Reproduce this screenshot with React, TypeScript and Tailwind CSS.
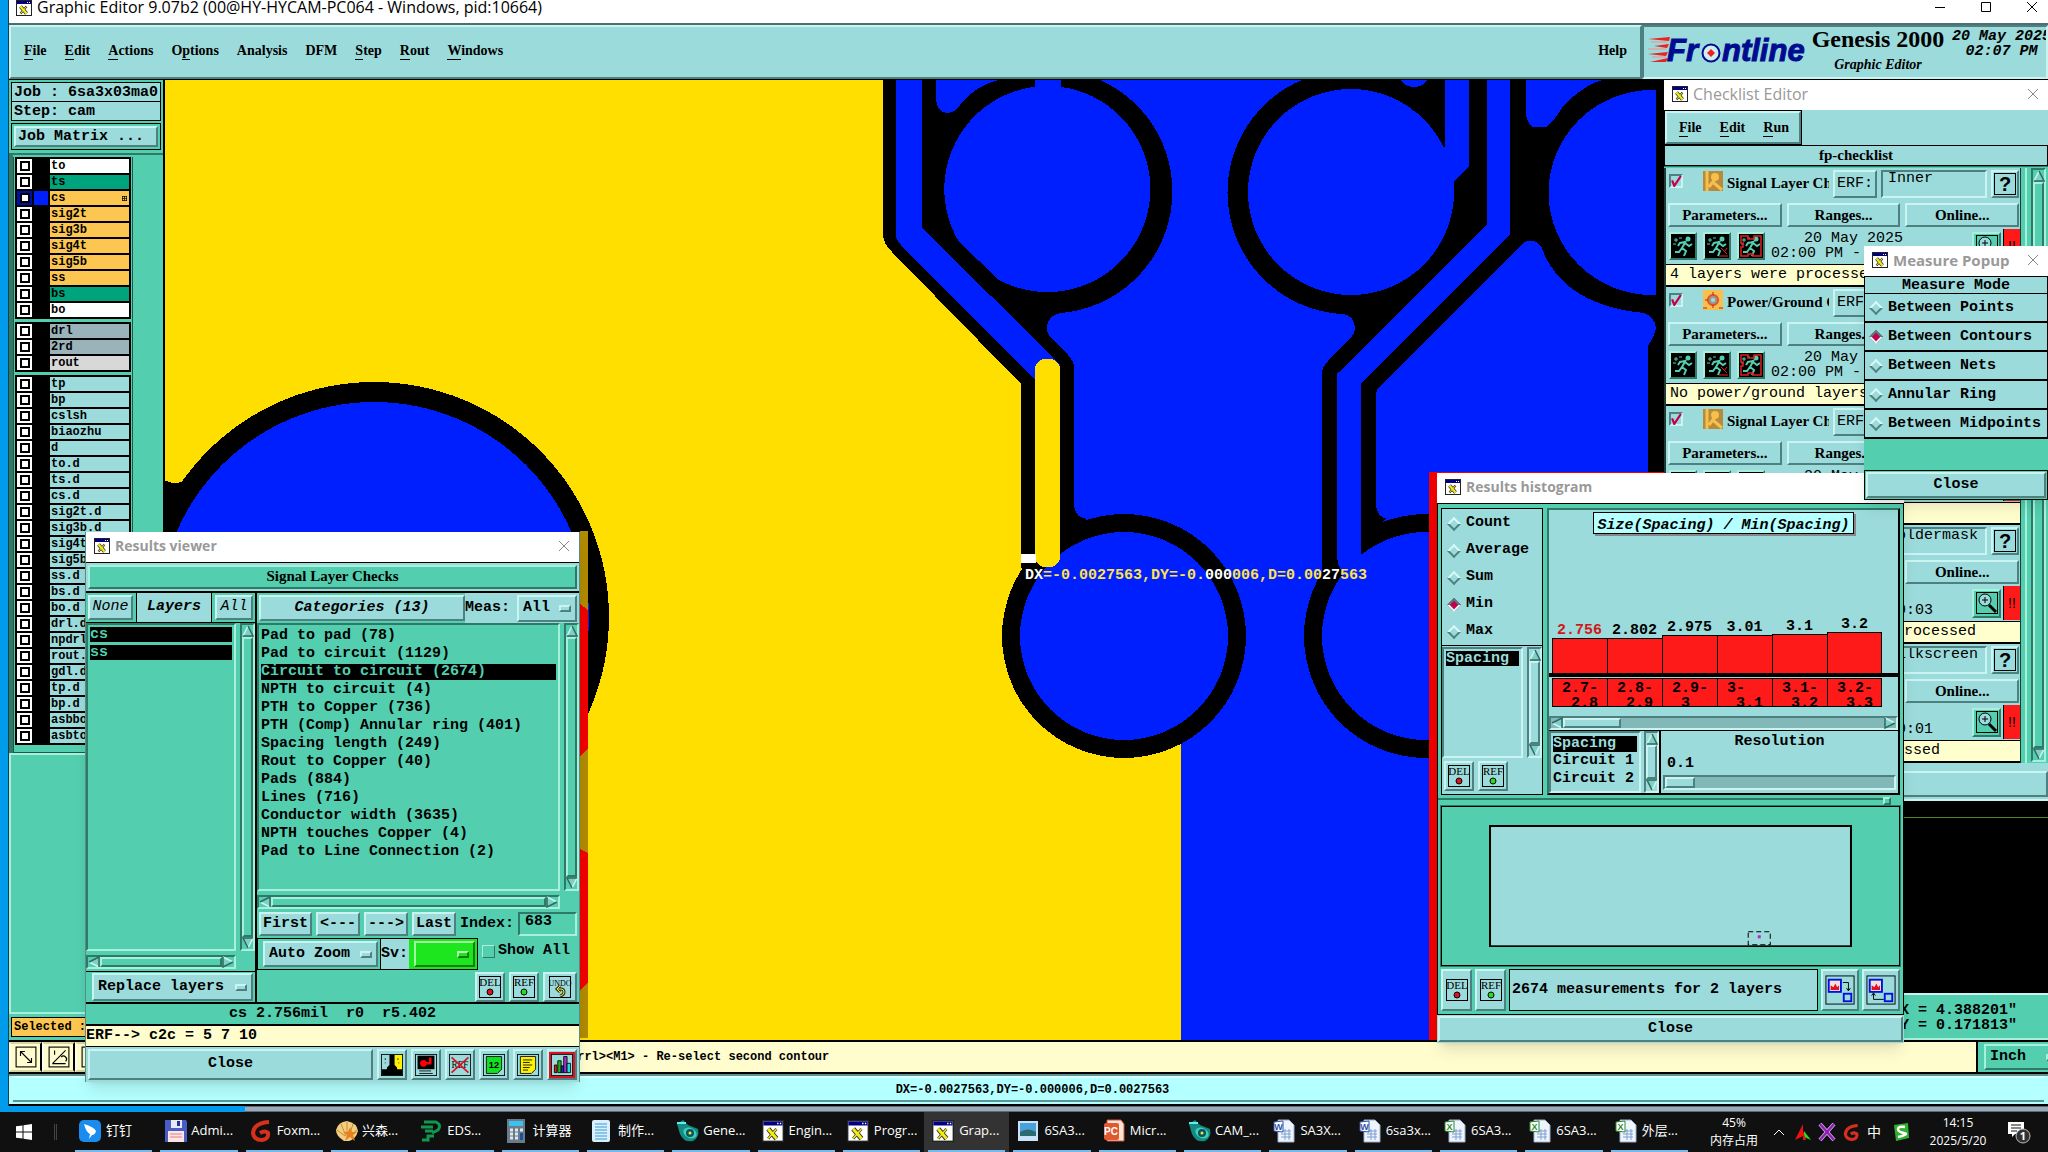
import { type FC, type ReactNode, useState } from "react";
import { clsx } from "clsx";

const MONO = "[font-family:'Liberation_Mono',monospace]";
const SERIF = "[font-family:'Liberation_Serif',serif]";
const UI = "[font-family:'Open_Sans','Noto_Sans_CJK_SC',sans-serif]";

// Motif style bevels
const raised = "border-2 border-t-[#c9f4f1] border-l-[#c9f4f1] border-b-[#4f8080] border-r-[#4f8080] bg-[#9cdbdb]";
const sunken = "border-2 border-t-[#4f8080] border-l-[#4f8080] border-b-[#c9f4f1] border-r-[#c9f4f1] bg-[#9cdbdb]";
const raisedGreen = "border-2 border-t-[#a6f0dc] border-l-[#a6f0dc] border-b-[#2f7a66] border-r-[#2f7a66] bg-[#53cfb0]";
const sunkenGreen = "border-2 border-t-[#2f7a66] border-l-[#2f7a66] border-b-[#a6f0dc] border-r-[#a6f0dc] bg-[#53cfb0]";

type Tone = "aqua" | "green";

const Btn: FC<{ children: ReactNode; className?: string; label?: string; tone?: Tone }> = ({ children, className, label, tone = "aqua" }) => (
  <button aria-label={label} className={clsx("flex items-center justify-center whitespace-nowrap", tone === "aqua" ? raised : raisedGreen, className)}>
    {children}
  </button>
);

const XIcon: FC<{ className?: string }> = ({ className = "size-4" }) => (
  <svg viewBox="0 0 16 16" className={clsx("shrink-0", className)}>
    <rect x="0.5" y="0.5" width="15" height="15" fill="#fff" stroke="#222" />
    <rect x="1" y="1" width="14" height="3" fill="#000080" />
    <path d="M11 2.500h1M13 2.500h1" stroke="#fff" />
    <path d="M4.500 6.500l6 7" stroke="#333" strokeWidth="3.600" />
    <path d="M10.500 6.500l-6 7" stroke="#333" strokeWidth="2" />
    <path d="M4.500 6.500l6 7" stroke="#f4ee10" strokeWidth="2.200" />
    <path d="M10.500 6.500l-6 7" stroke="#f4ee10" />
  </svg>
);

const CloseGlyph: FC<{ className?: string }> = ({ className }) => (
  <svg viewBox="0 0 12 12" className={clsx("size-3", className)} fill="none" stroke="currentColor">
    <path d="M1 1l10 10M11 1L1 11" />
  </svg>
);

const TitleBar: FC<{ title: string; size?: string; closable?: boolean }> = ({ title, size = "text-[15px]", closable = true }) => (
  <div className={clsx("flex h-[30px] shrink-0 items-center bg-white pr-[9px] pb-[2px] pl-2", UI)}>
    <XIcon />
    <span className={clsx("ml-[5px] flex-1 leading-5 whitespace-nowrap text-[#999]", size)}>{title}</span>
    {closable && (
      <button aria-label={`Close ${title}`} className="text-[#888]">
        <CloseGlyph />
      </button>
    )}
  </div>
);

const Arrow: FC<{ dir: "up" | "down" | "left" | "right" }> = ({ dir }) => (
  <svg viewBox="0 0 12 12" className={clsx("size-3 shrink-0", dir === "down" && "rotate-180", dir === "left" && "-rotate-90", dir === "right" && "rotate-90")}>
    <path d="M6 1L11 11H1Z" fill="#7fd0c4" />
    <path d="M1 11L6 1" stroke="#c9f4f1" strokeWidth="1.500" />
    <path d="M6 1L11 11H1" stroke="#2f6a62" strokeWidth="1.500" fill="none" />
  </svg>
);

const VScroll: FC<{ tone?: Tone; className?: string }> = ({ tone = "green", className }) => (
  <div className={clsx("flex w-[15px] shrink-0 flex-col items-center", tone === "green" ? sunkenGreen : sunken, className)}>
    <Arrow dir="up" />
    <div className={clsx("w-full flex-1", tone === "green" ? raisedGreen : raised)} />
    <Arrow dir="down" />
  </div>
);

const HScroll: FC<{ tone?: Tone; thumb?: string; className?: string }> = ({ tone = "green", thumb = "flex-1", className }) => (
  <div className={clsx("flex h-[14px] shrink-0 items-center", tone === "green" ? sunkenGreen : "border-2 border-t-[#4f8080] border-l-[#4f8080] border-b-[#c9f4f1] border-r-[#c9f4f1] bg-[#82b8b8]", className)}>
    <Arrow dir="left" />
    <div className={clsx("h-full", tone === "green" ? raisedGreen : raised, thumb)} />
    {thumb !== "flex-1" && <div className="flex-1" />}
    <Arrow dir="right" />
  </div>
);

const Menu: FC<{ label: string; options: string[]; className?: string; mark?: string }> = ({ label, options, className, mark = raised }) => (
  <div className={clsx("flex items-center", className)}>
    <select aria-label={label} className="min-w-0 flex-1 appearance-none bg-transparent pl-1 outline-none">
      {options.map(o => <option key={o}>{o}</option>)}
    </select>
    <span className={clsx("pointer-events-none mr-1 h-[7px] w-3", mark)} />
  </div>
);

const Radio: FC<{ name: string; label: string; checked: boolean; onPick: () => void; className?: string }> = ({ name, label, checked, onPick, className }) => (
  <label className={clsx("flex items-center gap-[7px] whitespace-nowrap", className)}>
    <input type="radio" name={name} checked={checked} onChange={onPick}
      className="ml-[2px] size-[10px] shrink-0 rotate-45 appearance-none border-2 border-t-[#d8faf8] border-l-[#d8faf8] border-b-[#4f8080] border-r-[#4f8080] checked:border-t-[#4f8080] checked:border-l-[#4f8080] checked:border-b-[#d8faf8] checked:border-r-[#d8faf8] checked:bg-[#c4004c]" />
    {label}
  </label>
);

const TagButton: FC<{ text: string; dot?: "red" | "green"; className?: string }> = ({ text, dot, className }) => (
  <Btn label={text} className={className}>
    <svg viewBox="0 0 24 24" className="h-6 w-6 overflow-visible">
      <rect x="1.500" y="1.500" width="21" height="21" fill="none" stroke="#000" />
      <text x="12" y="11" textAnchor="middle" fontSize={text.length > 3 ? 8 : 11} fontWeight="normal" fontFamily="Liberation Serif" fill="#000">{text}</text>
      {dot ? (
        <circle cx="12" cy="17" r="3" fill={dot === "red" ? "#e01020" : "#20e020"} stroke="#000" />
      ) : (
        <>
          <path d="M10 14h3q3 0 3 3t-4 4M12 11l-3 3 3 3" fill="none" stroke="#333" strokeWidth="3" />
          <path d="M10 14h3q3 0 3 3t-4 4M12 11l-3 3 3 3" fill="none" stroke="#f4ee10" />
        </>
      )}
    </svg>
  </Btn>
);

const menus: [string, number][] = [["File", 0], ["Edit", 0], ["Actions", 0], ["Options", 1], ["Analysis", -1], ["DFM", -1], ["Step", 0], ["Rout", 0], ["Windows", 0]];

const Mnemonic: FC<{ text: string; at: number }> = ({ text, at }) =>
  at < 0 ? <>{text}</> : (
    <>{text.slice(0, at)}<span className="border-b border-black pb-px">{text[at]}</span>{text.slice(at + 1)}</>
  );

const TopBar = () => (
  <header className="flex h-[57px] shrink-0 border-t-2 border-b border-t-[#4f6f6f] border-b-black bg-[#9cdbdb]">
    <nav className={clsx("flex min-w-0 flex-1 items-center gap-[18px] px-[13px] pb-[2px] text-[14px] font-bold", raised, SERIF)}>
      {menus.map(([text, at]) => (
        <button key={text} className="leading-5"><Mnemonic text={text} at={at} /></button>
      ))}
      <button className="ml-auto leading-5">Help</button>
    </nav>
    <div className={clsx("flex w-[406px] items-center overflow-hidden pl-[3px]", sunken)}>
      <svg viewBox="0 0 162 32" className="h-8 w-[162px] shrink-0">
        <path d="M1 3l22-2-1 4zM7 10l15-2-2 4zM1 18l20-2-2 4zM3 26l18-4-2 4z" fill="#ee2020" />
        <path d="M4 6h16M1 13h18M5 21h14" stroke="#ff8888" />
        <g fontFamily="Liberation Sans" fontWeight="bold" fontStyle="italic" fontSize="31" fill="#000c90" stroke="#000c90">
          <text x="20" y="25">Fr</text>
          <text x="75" y="25">ntline</text>
        </g>
        <circle cx="64" cy="17" r="8.500" fill="#cfeef0" stroke="#000c90" strokeWidth="2" />
        <path d="M64 13l4 4-4 4-4-4z" fill="#ee2020" />
      </svg>
      <div className={clsx("ml-[1px] w-[136px] shrink-0 pb-1 text-center font-bold whitespace-nowrap", SERIF)}>
        <div className="text-[24px] leading-7">Genesis 2000</div>
        <div className="pt-[2px] text-[14px] leading-5 italic">Graphic Editor</div>
      </div>
      <div className={clsx("ml-[6px] shrink-0 self-start pt-[2px] text-center text-[15px] leading-[15px] font-bold italic", MONO)}>
        <div>20 May 2025</div>
        <div>02:07 PM</div>
      </div>
    </div>
  </header>
);

const layerGroups: { names: string[] }[] = [
  { names: ["to", "ts", "cs", "sig2t", "sig3b", "sig4t", "sig5b", "ss", "bs", "bo"] },
  { names: ["drl", "2rd", "rout"] },
  {
    names: ["tp", "bp", "cslsh", "biaozhu", "d", "to.d", "ts.d", "cs.d", "sig2t.d", "sig3b.d", "sig4t.d", "sig5b.d",
      "ss.d", "bs.d", "bo.d", "drl.d", "npdrl.d", "rout.d", "gdl.d", "tp.d", "bp.d", "asbbo", "asbto"],
  },
];

const layerColor = (name: string) => {
  if (name === "to" || name === "bo") return "bg-white";
  if (name === "ts" || name === "bs") return "bg-[#00a47c]";
  if (/^(cs|ss|sig\d.)$/.test(name)) return "bg-[#fcc651]";
  if (name === "drl" || name === "2rd") return "bg-[#9ab3bb]";
  if (name === "rout") return "bg-[#d8d8d8]";
  return "bg-[#9cdbdb]";
};

const LayerPanel = () => (
  <aside className="flex w-[156px] shrink-0 flex-col border-r-2 border-black bg-[#53cfb0]">
    <div className={clsx("px-[2px] pt-[2px] text-[15px] leading-[19px] font-bold whitespace-nowrap", MONO)}>
      <div className="h-5 border border-black bg-[#9cdbdb] pl-[2px]">Job : 6sa3x03ma0</div>
      <div className="h-[19px] border border-t-0 border-black bg-[#9cdbdb] pl-[2px]">Step: cam</div>
      <div className="mt-[2px] border border-black p-[2px]">
        <Btn className="h-[21px] w-full pl-[2px]"><span className="flex-1 text-left">Job Matrix ...</span></Btn>
      </div>
    </div>
    <div className="mt-[3px] flex border-t-2 border-l-4 border-[#2f7a66] bg-[#53cfb0] pt-[2px]">
      <div className="flex w-[120px] flex-col gap-[3px] border border-t-0 border-[#1d5a4a] px-px pb-[7px]">
        {layerGroups.map(g => (
          <div key={g.names[0]} className="flex flex-col gap-[2px] bg-black p-[2px]">
            {g.names.map(n => (
              <label key={n} className={clsx("flex h-[14px] text-[12px] leading-[14px] font-bold", MONO)}>
                <span className={clsx("flex w-[15px] items-center justify-center", n === "cs" ? "bg-[#0010a0]" : "bg-white")}>
                  <input type="checkbox" aria-label={n} className="size-[10px] appearance-none border-2 border-black bg-white" />
                </span>
                <span className={clsx("mx-[2px] w-[14px]", n === "cs" ? "bg-[#001fff]" : "bg-black")} />
                <span className={clsx("flex flex-1 items-center justify-between overflow-hidden pr-[2px] pl-px", layerColor(n))}>
                  {n}
                  {n === "cs" && <svg viewBox="0 0 5 5" className="size-[5px]"><path d="M0 .500h5M0 2.500h5M0 4.500h5M.500 0v5M2.500 0v5M4.500 0v5" stroke="#000" strokeWidth=".700" /></svg>}
                </span>
              </label>
            ))}
          </div>
        ))}
      </div>
    </div>
    <div className="flex-1 border-t-2 border-l-2 border-[#a6f0dc]" />
    <div className="border-t-2 border-[#a6f0dc] px-[2px] py-[3px]">
      <div className={clsx("h-[20px] border border-black bg-[#fcc651] pl-[2px] text-[12px] leading-[18px] font-bold", MONO)}>Selected :</div>
    </div>
  </aside>
);

// Board artwork, drawn in screen units
const Board = () => (
  <svg viewBox="165 80 1499 960" preserveAspectRatio="xMinYMin slice" className="h-full w-full" shapeRendering="crispEdges">
    <rect x="164" y="80" width="1500" height="960" fill="#ffdf00" />
    <circle cx="374" cy="617" r="235" fill="#000" />
    <path d="M164 480Q170 483 174 483Q181 483 184 480L230 560V800H164Z" fill="#000" />
    <circle cx="374" cy="617" r="215" fill="#001fff" />
    <path d="M580 531h8v507h-8z" fill="#b08a00" />
    <path d="M580 604l8 6V748l-8 8zM580 849l8 4V982l-8 8z" fill="#f00000" />

    <path d="M883 80V235Q884 245 892 252L1021 384V567L1060 636H1181V1040H1664V80Z" fill="#000" />
    <path d="M1181 640H1664V1040H1181Z" fill="#001fff" />
    <path d="M1100 80A122 122 0 0 1 1061 313Q1047 316 1047 328Q1047 334 1051 338L1068 355Q1074 361 1074 368V505Q1076 518 1085 518L1124 600L1181 720H1400L1322 600V374Q1322 367 1328 361L1350 338Q1355 334 1355 328Q1354 314 1340 314A122 122 0 0 1 1302 80Z" fill="#001fff" />
    <path d="M1379 387L1520 246Q1531 235 1541 246Q1562 305 1644 313Q1655 317 1656 328Q1655 335 1648 346V1040H1440L1376 600V396Q1376 390 1379 387Z" fill="#001fff" />
    <circle cx="1124" cy="636" r="122" fill="#000" />
    <circle cx="1426" cy="636" r="122" fill="#000" />
    <path d="M1376 505Q1378 518 1386 518L1376 530Z" fill="#000" />
    <path d="M1021 540H1074V560H1021Z" fill="#000" />
    <circle cx="1124" cy="636" r="104" fill="#001fff" />
    <circle cx="1426" cy="636" r="104" fill="#001fff" />

    <path d="M896 80H922V228L1060 364V390H1045L901 245Q896 240 896 234Z" fill="#001fff" />
    <path d="M936 80V100Q938 113 948 113Q957 112 962 102Q975 87 998 80Z" fill="#001fff" />
    <path d="M1035 80h26v16h-26z" fill="#001fff" />
    <path d="M959 242A103 103 0 1 1 999 280Z" fill="#001fff" />
    <circle cx="1351" cy="192" r="103" fill="#001fff" />
    <path d="M1401 80h26q-4 7-13 7t-13-7z" fill="#001fff" />
    <path d="M1436 80H1445V147Q1430 116 1412 110Z" fill="#000" />
    <path d="M1445 80H1469V166L1454 181V192H1440V147H1445Z" fill="#001fff" />
    <path d="M1487 80H1510V234L1361 383V555L1350 580Q1337 570 1337 556V374L1487 225Z" fill="#001fff" />
    <path d="M1526 80V115Q1529 127 1534 127H1546Q1554 121 1562 108Q1580 87 1602 80Z" fill="#001fff" />
    <path d="M1656 90H1652A103 102 0 0 0 1652 295H1656Z" fill="#001fff" />

    <rect x="1035" y="359" width="25" height="208" rx="10" fill="#ffdf00" />
    <rect x="1021" y="554" width="15" height="9" fill="#fff" />
    <path d="M1429 472H1664V475H1437V1040H1429Z" fill="#f00000" />
    <text x="1025" y="579" fontFamily="Liberation Mono" fontSize="15" fontWeight="bold" fill="#ffe24a">
      <tspan fill="#fff">DX</tspan>=-0.0027563,DY=-0.<tspan fill="#fff">000</tspan>006,D=0.00<tspan fill="#fff">27</tspan>563
    </text>
  </svg>
);

const OverviewColumn = () => (
  <section className="flex w-[384px] shrink-0 flex-col bg-[#53cfb0]">
    <div className="flex-1" />
    <div className="h-[194px] border-t-2 border-[#c9f4f1] bg-black pt-4"><div className="h-px bg-[#4c8a20]" /></div>
    <div className={clsx("h-[47px] border-y-2 border-t-[#c9f4f1] border-b-[#a6f0dc] pt-[8px] pl-[236px] text-[15px] leading-[15px] font-bold whitespace-pre", MONO)}>
      <div>X = 4.388201"</div>
      <div>Y = 0.171813"</div>
    </div>
  </section>
);

const CreamButton: FC<{ label: string; children: ReactNode }> = ({ label, children }) => (
  <button aria-label={label} className="flex w-[33px] items-center justify-center border-2 border-y-[#d8d4a0] border-l-[#fffff0] border-r-black bg-[#fffcce]">
    <svg viewBox="0 0 20 20" className="size-[22px]" fill="none" stroke="#000">
      <rect x="1" y="1" width="18" height="18" />
      {children}
    </svg>
  </button>
);

const MessageBar = () => (
  <div className="flex h-[34px] shrink-0 border-y-2 border-black bg-[#fffcce]">
    <CreamButton label="Pan"><path d="M5 5l10 10M5 9V5h4M15 11v4h-4" /></CreamButton>
    <CreamButton label="Angle"><path d="M4 16L16 4M6 4v4M4 16h12M12 10q2-2 4 0t0 4" /></CreamButton>
    <CreamButton label="Grid"><path d="M5 5h10v10H5zM5 10h10" /></CreamButton>
    <div className={clsx("flex-1 pl-[462px] text-[12px] leading-[30px] font-bold whitespace-nowrap", MONO)}>
      orrl&gt;&lt;M1&gt; - Re-select second contour
    </div>
    <div className="w-[72px] overflow-hidden border-l-2 border-black bg-[#53cfb0] py-[2px] pl-[6px]">
      <Menu label="Units" options={["Inch", "MM"]} className={clsx("h-full w-20 text-[15px] font-bold", MONO, raisedGreen)} mark={raisedGreen} />
    </div>
  </div>
);

const ScreenWindow = () => (
  <div className="ml-2 flex min-h-0 flex-1 flex-col border-l border-[#1b3c4c]">
    <div className={clsx("flex h-[23px] shrink-0 items-center bg-white pr-[10px] pl-[7px]", UI)}>
      <XIcon className="mb-2 size-4" />
      <span className="mb-[10px] ml-[5px] flex-1 text-[16px] leading-5">Graphic Editor 9.07b2 (00@HY-HYCAM-PC064 - Windows, pid:10664)</span>
      <span className="mb-[10px] flex gap-[34px]">
        <button aria-label="Minimize"><svg viewBox="0 0 12 12" className="size-3"><path d="M1 6.500h10" stroke="#000" /></svg></button>
        <button aria-label="Maximize"><svg viewBox="0 0 12 12" className="size-3"><path d="M1.500 1.500h9v9h-9z" stroke="#000" fill="none" /></svg></button>
        <button aria-label="Close"><CloseGlyph /></button>
      </span>
    </div>
    <TopBar />
    <div className="flex min-h-0 flex-1">
      <LayerPanel />
      <div className="min-w-0 flex-1 overflow-hidden"><Board /></div>
      <OverviewColumn />
    </div>
    <MessageBar />
    <div className="h-[32px] shrink-0 border-y-2 border-t-[#5d9390] border-b-black bg-[#b4ffff] px-1">
      <div className={clsx("h-[26px] border-y-2 border-t-[#d8ffff] border-b-[#5d9390] pl-2 text-center text-[12px] leading-[24px] font-bold", MONO)}>
        DX=-0.0027563,DY=-0.000006,D=0.0027563
      </div>
    </div>
  </div>
);

const categories = [
  "Pad to pad (78)", "Pad to circuit (1129)", "Circuit to circuit (2674)", "NPTH to circuit (4)", "PTH to Copper (736)",
  "PTH (Comp) Annular ring (401)", "Spacing length (249)", "Rout to Copper (40)", "Pads (884)", "Lines (716)",
  "Conductor width (3635)", "NPTH touches Copper (4)", "Pad to Line Connection (2)",
];

const footIcons: { label: string; art: ReactNode; alert?: boolean }[] = [
  { label: "Highlight", art: <><rect x="0" y="0" width="24" height="24" fill="#9cdbdb" /><path d="M15 0h9v18h-9z" fill="#fff200" /><path d="M9 0h6v12l3 3v2h6v7H0v-7h6v-2l3-3z" fill="#000" /><path d="M4 4v2M4 9v1M19 4v2M20 9v1" stroke="#000" /></> },
  { label: "Snapshot", art: <><rect x="2" y="1" width="20" height="16" fill="#000" /><circle cx="9" cy="10" r="4" fill="#f00" /><path d="M9 10h8V3" stroke="#f00" strokeWidth="3" fill="none" /><path d="M4 19h14M4 22h16" stroke="#000" /></> },
  { label: "Remove reference", art: <><text x="12" y="16" textAnchor="middle" fontSize="11" fontWeight="normal" fontFamily="Liberation Serif">REF</text><path d="M2 3l20 18M22 3L2 21" stroke="#e01020" strokeWidth="2" /></> },
  { label: "Report", art: <><path d="M3 2h18v15l-5 5H3z" fill="#10e020" stroke="#000" /><text x="12" y="15" textAnchor="middle" fontSize="11" fontWeight="bold" fontFamily="Liberation Sans">12</text></> },
  { label: "Notes", art: <><path d="M3 2h18v15l-5 5H3z" fill="#fff200" stroke="#000" /><path d="M6 6h11M6 9h8M6 12h11M6 15h8M6 18h6" stroke="#000" /></> },
  { label: "Histogram", alert: true, art: <><path d="M3 12h3v9H3z" fill="#e02020" stroke="#000" /><path d="M7 7h4v14H7z" fill="#20b020" stroke="#000" /><path d="M11 13h3v8h-3z" fill="#2020e0" stroke="#000" /><path d="M14 2h4v19h-4z" fill="#a030c0" stroke="#000" /><path d="M18 10h4v11h-4z" fill="#20e0e0" stroke="#000" /></> },
];

const ResultsViewer = () => (
  <section className={clsx("absolute top-[532px] left-[85px] flex w-[495px] flex-col border-x border-[#5a8a8a] bg-[#53cfb0] text-[15px] font-bold shadow-lg", MONO)}>
    <TitleBar title="Results viewer" size="text-[14px]" />
    <div className="border-y border-b-2 border-black bg-[#9cdbdb] p-[2px]">
      <h2 className={clsx("h-[24px] text-center leading-[19px]", raisedGreen, SERIF)}>Signal Layer Checks</h2>
    </div>
    <div className="flex h-[411px]">
      <div className="flex w-[171px] shrink-0 flex-col border-r-2 border-black">
        <div className="flex h-[30px] items-stretch gap-[3px] border-b border-black p-[2px] italic">
          <Btn className="w-[45px] font-normal">None</Btn>
          <span className="-my-[2px] flex flex-1 items-center justify-center border-x border-black bg-[#9cdbdb]">Layers</span>
          <Btn className="w-[38px] font-normal">All</Btn>
        </div>
        <div className="flex flex-1 gap-1">
          <ul className={clsx("flex flex-1 flex-col gap-[3px] p-[2px] leading-[15px] text-[#53cfb0]", sunkenGreen)}>
            <li className="bg-black">cs</li>
            <li className="bg-black">ss</li>
          </ul>
          <VScroll />
        </div>
        <HScroll className="mt-1 mr-[19px] mb-[2px]" />
        <div className="border-t border-b-2 border-black py-px pr-[2px] pl-[6px]">
          <Menu label="Layer action" options={["Replace layers", "Add layers"]} className={clsx("h-[28px]", raised)} />
        </div>
      </div>
      <div className="flex min-w-0 flex-1 flex-col">
        <div className="flex h-[30px] items-stretch p-[2px] pr-0">
          <Btn className="w-[206px] italic">Categories (13)</Btn>
          <div className="-my-[2px] flex flex-1 items-center justify-between bg-[#9cdbdb] pr-[2px]">
            <span>Meas:</span>
            <Menu label="Measurements" options={["All", "None"]} className={clsx("h-[27px] w-[60px]", raised)} />
          </div>
        </div>
        <div className="flex h-[269px] gap-1">
          <ul className={clsx("flex-1 py-[2px] pr-[2px] pl-[2px] leading-[18px]", sunkenGreen)}>
            {categories.map((c, i) => (
              <li key={c} className={clsx("h-[18px]", i === 2 && "border-y border-[#53cfb0] bg-black leading-[16px] text-[#53cfb0]")}>{c}</li>
            ))}
          </ul>
          <VScroll />
        </div>
        <HScroll className="mt-1 mr-[19px]" />
        <div className="mt-[3px] flex h-[24px] items-stretch gap-1 pr-[2px] pl-[2px]">
          <Btn className="w-[53px]">First</Btn>
          <Btn className="w-[44px]">&lt;---</Btn>
          <Btn className="w-[44px]">---&gt;</Btn>
          <Btn className="w-[44px]">Last</Btn>
          <label htmlFor="idx" className="self-center">Index:</label>
          <input id="idx" defaultValue="683" className={clsx("min-w-0 flex-1 pb-1 pl-[5px] outline-none", sunkenGreen)} />
        </div>
        <div className="mt-[2px] flex h-[32px] items-stretch">
          <div className="w-[124px] border border-black p-[2px] pl-[5px]">
            <Menu label="Zoom mode" options={["Auto Zoom", "Manual"]} className={clsx("h-[26px]", raised)} />
          </div>
          <div className="flex w-[97px] border border-l-0 border-black bg-[#1ee61e]">
            <span className="flex w-7 items-center bg-[#9cdbdb]">Sv:</span>
            <Menu label="Severity" options={[""]} mark="border-2 border-t-[#b8ffb0] border-l-[#b8ffb0] border-b-[#108010] border-r-[#108010]"
              className="m-[2px] ml-[5px] flex-1 border-2 border-t-[#a0ffa0] border-l-[#a0ffa0] border-b-[#108010] border-r-[#108010]" />
          </div>
          <label className="ml-1 flex items-center gap-[3px] pb-[6px] whitespace-nowrap">
            <input type="checkbox" className="size-[13px] appearance-none border border-t-[#a6f0dc] border-l-[#a6f0dc] border-b-[#2f7a66] border-r-[#2f7a66]" />
            Show All
          </label>
        </div>
        <div className="mt-[2px] flex flex-1 justify-end gap-1 border-b-2 border-black pr-[2px]">
          <TagButton text="DEL" dot="red" className="h-[30px] w-[30px]" />
          <TagButton text="REF" dot="green" className="h-[30px] w-[30px]" />
          <TagButton text="UNDO" className="h-[30px] w-[34px]" />
        </div>
      </div>
    </div>
    <p className="h-[22px] border-b-2 border-black text-center leading-[20px] whitespace-pre">cs 2.756mil  r0  r5.402</p>
    <p className="h-[21px] border-b border-black bg-[#fffcce] leading-[20px]">ERF--&gt; c2c = 5 7 10</p>
    <div className="flex h-[35px] gap-1 bg-[#9cdbdb] p-[2px]">
      <Btn className="flex-1">Close</Btn>
      {footIcons.map(({ label, art, alert }) => (
        <Btn key={label} label={label} className="w-[30px]">
          <span className={clsx(alert && "bg-[#9cdbdb] outline-2 outline-[#e01020]")}>
            <svg viewBox="-1 -1 26 26" className="size-[22px]">{art}<rect x="-.500" y="-.500" width="25" height="25" fill="none" stroke="#000" /></svg>
          </span>
        </Btn>
      ))}
    </div>
  </section>
);

const RunIcon: FC<{ kind: number }> = ({ kind }) => (
  <svg viewBox="0 0 24 24" className="size-6">
    <rect width="24" height="24" fill="#000" />
    <circle cx="17" cy="5" r="2.500" fill="#53cfb0" />
    <path d="M15 7l-4 7 4 3-2 5M11 14l-3 4H4M14 9l4 3 3-2M14 8l-5 1-2 3" stroke="#53cfb0" strokeWidth="2" fill="none" />
    <path d="M3 6h4M5 4v4M8 4h3M2 10h3" stroke="#53cfb0" />
    {kind === 1 && <path d="M14 22h9M16 14l6 6M22 14l-3 4" stroke="#e02020" />}
    {kind === 2 && <path d="M2 2h7v3h6V2h7v20h-8v-2H9v2H2v-9h2V9H2z" fill="none" stroke="#e02020" strokeWidth="1.500" />}
  </svg>
);

const CheckIcon: FC<{ ground?: boolean }> = ({ ground }) => (
  <svg viewBox="0 0 20 20" className="mt-px ml-[16px] size-5 shrink-0">
    <rect width="20" height="20" fill={ground ? "#f7bf4c" : "#b88a3c"} />
    {ground ? (
      <>
        <circle cx="10" cy="10" r="5" fill="#9a9a9a" stroke="#e05020" strokeWidth="2" />
        <circle cx="10" cy="10" r="2" fill="#9cdbdb" />
        <path d="M10 2v3M10 15v3M2 10h3M0 18h4M16 18h4" stroke="#c02010" />
      </>
    ) : (
      <>
        <circle cx="12" cy="6" r="4" fill="#f7bf4c" />
        <path d="M4 0v20M6 16l6-8M11 12l8 7" stroke="#f7bf4c" strokeWidth="3" />
      </>
    )}
  </svg>
);

interface Check {
  title: string;
  erf: string;
  took: string;
  message: string;
  ground?: boolean;
}

const checks: Check[] = [
  { title: "Signal Layer Checks", erf: "Inner", took: "0:00:03", message: "4 layers were processed" },
  { title: "Power/Ground Checks", erf: "Inner", took: "0:00:01", message: "No power/ground layers found", ground: true },
  { title: "Signal Layer Checks", erf: "Outer", took: "0:00:03", message: "2 layers were processed" },
  { title: "Solder Mask Checks", erf: "Soldermask", took: "0:00:03", message: "2 soldermask layers were processed" },
  { title: "Silk Screen Checks", erf: "Silkscreen", took: "0:00:01", message: "No silkscreen layers processed" },
];

const CheckItem: FC<{ check: Check; id: number }> = ({ check, id }) => (
  <li className="flex h-[119px] flex-col border-b-2 border-black bg-[#9cdbdb]">
    <div className="flex h-[32px] gap-1 pt-[2px] pr-px pl-[3px]">
      <input type="checkbox" defaultChecked aria-label={check.title} id={`check-${id}`} className="peer hidden" />
      <label htmlFor={`check-${id}`} className={clsx("mt-1 size-[14px] shrink-0", sunken)}>
        <svg viewBox="0 0 10 10" className="size-[11px]"><path d="M1 4l2 5 6-9" stroke="#c4004c" strokeWidth="2" fill="none" /></svg>
      </label>
      <CheckIcon ground={check.ground} />
      <span className={clsx("w-[102px] shrink-0 overflow-hidden text-[15px] leading-[26px] font-bold whitespace-nowrap", SERIF)}>{check.title}</span>
      <Btn className="h-[28px] w-[44px]">ERF:</Btn>
      <input aria-label={`${check.title} ERF`} defaultValue={check.erf} className={clsx("h-[28px] min-w-0 flex-1 pb-3 pl-[5px] outline-none", sunken)} />
      <Btn label="Help" className="h-[28px] w-[28px] [font-family:'Liberation_Sans',sans-serif] text-[20px] font-bold">
        <span className="flex size-[22px] items-center justify-center border border-black">?</span>
      </Btn>
    </div>
    <div className={clsx("mt-[3px] flex h-[24px] gap-[5px] px-px pl-[2px] text-[15px] font-bold", SERIF)}>
      <Btn className="flex-1">Parameters...</Btn>
      <Btn className="flex-1">Ranges...</Btn>
      <Btn className="flex-1">Online...</Btn>
    </div>
    <div className="mt-[2px] flex h-[34px] items-center gap-[6px] pl-[3px]">
      {[0, 1, 2].map(k => <Btn key={k} tone="green" label={`Run ${k + 1}`} className="size-[28px]"><RunIcon kind={k} /></Btn>)}
      <div className="min-w-0 flex-1 leading-[15px] whitespace-nowrap">
        <div className="pl-[33px]">20 May 2025</div>
        <div>02:00 PM - {check.took}</div>
      </div>
      <Btn tone="green" label="View results" className="size-[29px]">
        <svg viewBox="0 0 24 24" className="size-6" fill="none" stroke="#000">
          <rect x="1.500" y="1.500" width="21" height="21" />
          <circle cx="10" cy="9" r="6" fill="#9cdbdb" />
          <path d="M10 6v6M7 9h6" />
          <path d="M14 14l7 7" strokeWidth="3" />
        </svg>
      </Btn>
      <span className="-ml-1 flex h-[34px] w-[17px] items-center justify-center border-l border-black bg-[#ff1a1a] [font-family:'Liberation_Sans',sans-serif] text-[14px]">!!</span>
    </div>
    <p className="mt-auto h-[21px] overflow-hidden border-t border-black bg-[#ffffce] pl-[4px] leading-[19px] whitespace-nowrap">{check.message}</p>
  </li>
);

const ChecklistEditor = () => (
  <section className={clsx("absolute top-[80px] right-0 flex w-[384px] flex-col bg-[#53cfb0] text-[15px]", MONO)}>
    <TitleBar title="Checklist Editor" size="text-[16px]" />
    <div className={clsx("bg-[#9cdbdb] text-[14px] font-bold", SERIF)}>
      <nav className="w-[138px] border border-black">
        <div className={clsx("flex h-[33px] items-center gap-[18px] px-[12px]", raised)}>
          {["File", "Edit", "Run"].map(m => <button key={m}><Mnemonic text={m} at={0} /></button>)}
        </div>
      </nav>
      <h2 className="h-[21px] border border-black text-center text-[15px] leading-[18px]">fp-checklist</h2>
    </div>
    <div className="flex justify-between gap-[4px] border-t border-[#2f7a66] pt-px pr-[2px]">
      <ul className="min-w-0 flex-1 border-r border-l-2 border-[#1d3a34]">
        {checks.map((c, i) => <CheckItem key={i} check={c} id={i} />)}
      </ul>
      <div className="w-[2px] bg-[#a6f0dc]" />
      <VScroll className="mb-px" />
    </div>
    <div className="bg-[#9cdbdb] pt-[8px] pb-[2px]"><div className={clsx("h-[26px]", raised)} /></div>
  </section>
);

const modes = ["Between Points", "Between Contours", "Between Nets", "Annular Ring", "Between Midpoints"];

const MeasurePopup = () => {
  const [mode, setMode] = useState("Between Contours");
  return (
    <section className={clsx("absolute top-[246px] right-0 flex w-[184px] flex-col bg-[#53cfb0] text-[15px] font-bold shadow-lg", MONO)}>
      <TitleBar title="Measure Popup" />
      <h2 className="h-[18px] border border-black bg-[#9cdbdb] text-center leading-[17px]">Measure Mode</h2>
      {modes.map(m => (
        <Radio key={m} name="mode" label={m} checked={mode === m} onPick={() => setMode(m)} className="h-[29px] border border-t-0 border-b-2 border-black bg-[#9cdbdb] pt-px pl-[4px]" />
      ))}
      <div className="mt-[31px] border border-black p-px">
        <Btn className="h-[26px] w-full">Close</Btn>
      </div>
    </section>
  );
};

const bins = [
  { value: "2.756", h: 35, from: "2.7-", to: "2.8", hot: true },
  { value: "2.802", h: 35, from: "2.8-", to: "2.9" },
  { value: "2.975", h: 38, from: "2.9-", to: "3" },
  { value: "3.01", h: 38, from: "3-", to: "3.1" },
  { value: "3.1", h: 39, from: "3.1-", to: "3.2" },
  { value: "3.2", h: 41, from: "3.2-", to: "3.3" },
];

const SwapIcon: FC<{ back?: boolean }> = ({ back }) => (
  <svg viewBox="0 0 32 32" className="size-[30px]" fill="none">
    <rect x="1" y="1" width="30" height="30" stroke="#000" />
    <rect x="4" y="5" width="13" height="13" fill="#f0e0e0" stroke="#0010e0" strokeWidth="2" />
    <path d="M6 16V11l3 2 2-4 2 4 2-2v5z" fill="#e01020" />
    <rect x="20" y="20" width="8" height="8" stroke="#0010e0" strokeWidth="2" />
    {back ? <path d="M19 26H8v-6M6 22l2-3 2 3" stroke="#000" /> : <path d="M19 8h6v8M23 14l2 3 2-3" stroke="#000" />}
  </svg>
);

const Histogram = () => {
  const [stat, setStat] = useState("Min");
  return (
    <section className={clsx("absolute top-[473px] right-[144px] flex w-[467px] flex-col bg-[#53cfb0] text-[15px] font-bold shadow-lg", MONO)}>
      <TitleBar title="Results histogram" size="text-[14px]" closable={false} />
      <div className="flex flex-col border border-black">
        <div className="flex gap-[4px] px-[3px] pt-[4px]">
          <div className="flex w-[102px] shrink-0 flex-col border border-black bg-[#9cdbdb]">
            <div className="flex flex-col border-b border-black pt-px pl-[5px]">
              {["Count", "Average", "Sum", "Min", "Max"].map(s => (
                <Radio key={s} name="stat" label={s} checked={stat === s} onPick={() => setStat(s)} className="h-[27px]" />
              ))}
            </div>
            <div className="flex h-[112px] gap-1 pt-px">
              <ul className={clsx("flex-1 p-[2px]", sunken)}>
                <li className="bg-black leading-[15px] text-[#9cdbdb]">Spacing</li>
              </ul>
              <VScroll tone="aqua" />
            </div>
            <div className="flex gap-1 pt-[3px] pb-[3px] pl-[2px]">
              <TagButton text="DEL" dot="red" className="h-[30px] w-[30px]" />
              <TagButton text="REF" dot="green" className="h-[30px] w-[30px]" />
            </div>
          </div>
          <div className="flex min-w-0 flex-1 flex-col border-2 border-t-[#2f7a66] border-l-[#2f7a66] border-r-black border-b-black bg-[#9cdbdb]">
            <h3 className="mx-auto mt-[2px] h-[22px] border border-black bg-[#b4ffff] px-[3px] leading-[25px] whitespace-nowrap italic shadow-[2px_2px_0_#888]">
              Size(Spacing) / Min(Spacing)
            </h3>
            <div className="flex h-[143px] items-end border-b-4 border-black pl-[3px]">
              {bins.map((b, i) => (
                <div key={b.value} className="w-[55px] text-center">
                  <div className={clsx("leading-[15px]", b.hot && "text-[#d01818]")}>{b.value}</div>
                  <div className={clsx("border-t border-l border-black bg-[#ff1a1a]", i === 5 && "border-r")} style={{ height: b.h }} />
                </div>
              ))}
            </div>
            <div className="mt-px mb-[9px] flex pl-[3px] leading-[15px]">
              {bins.map((b, i) => (
                <div key={b.from} className={clsx("h-[29px] w-[55px] border-y border-l border-black bg-[#ff1a1a] pt-[2px] pl-[9px]", i === 5 && "border-r")}>
                  <div>{b.from}</div>
                  <div className="pl-[9px]">{b.to}</div>
                </div>
              ))}
            </div>
            <HScroll tone="aqua" thumb="w-[58px]" />
            <div className="flex h-[63px] border-t border-black">
              <ul className={clsx("w-[92px] overflow-hidden px-[2px] py-[2px] leading-[18px] whitespace-nowrap", sunken)}>
                <li className="mt-px h-[16px] bg-black leading-[16px] text-[#9cdbdb]">Spacing</li>
                <li>Circuit 1</li>
                <li>Circuit 2</li>
              </ul>
              <VScroll tone="aqua" className="ml-[3px]" />
              <label className="flex flex-1 flex-col border-l-2 border-black px-[2px] pb-[2px]">
                <span className="text-center leading-[22px]">Resolution</span>
                <span className="pl-[4px] leading-[22px]">0.1</span>
                <input type="range" min="0" max="10" defaultValue="0"
                  className="h-[15px] w-full appearance-none border-2 border-t-[#4f8080] border-l-[#4f8080] border-b-[#c9f4f1] border-r-[#c9f4f1] bg-[#82b8b8] [&::-webkit-slider-thumb]:h-[11px] [&::-webkit-slider-thumb]:w-[30px] [&::-webkit-slider-thumb]:appearance-none [&::-webkit-slider-thumb]:border-2 [&::-webkit-slider-thumb]:border-t-[#c9f4f1] [&::-webkit-slider-thumb]:border-l-[#c9f4f1] [&::-webkit-slider-thumb]:border-r-[#4f8080] [&::-webkit-slider-thumb]:border-b-[#4f8080] [&::-webkit-slider-thumb]:bg-[#9cdbdb]" />
              </label>
            </div>
          </div>
        </div>
        <div className="mt-[3px] flex h-2 flex-col items-end pr-3">
          <div className="-mr-3 w-full shrink-0 self-stretch border-t-2 border-[#2f7a66]" />
          <div className={clsx("-mt-[3px] size-2 shrink-0", raisedGreen)} />
        </div>
        <div className="mx-[3px] border border-black px-[47px] py-[18px] outline-1 outline-[#2f7a66]">
          <svg viewBox="0 0 362 122" className="w-full">
            <rect x="1" y="1" width="360" height="120" fill="#9cdbdb" stroke="#000" strokeWidth="2" />
            <path d="M258.500 106.500h22v13h-22z" fill="none" stroke="#000" strokeDasharray="5 3" />
            <rect x="268" y="110" width="3" height="3" fill="#c020d0" />
          </svg>
        </div>
        <div className="flex h-[48px] gap-[3px] p-[3px]">
          <TagButton text="DEL" dot="red" className="w-[31px]" />
          <TagButton text="REF" dot="green" className="w-[31px]" />
          <span className="flex flex-1 items-center border border-black bg-[#9cdbdb] pl-[2px] whitespace-nowrap">2674 measurements for 2 layers</span>
          <Btn label="Copy to" className="w-[38px]"><SwapIcon /></Btn>
          <Btn label="Copy from" className="w-[38px]"><SwapIcon back /></Btn>
        </div>
      </div>
      <div className="bg-[#9cdbdb] p-px"><Btn className="h-[26px] w-full">Close</Btn></div>
    </section>
  );
};

const Doc: FC<{ letter: string; color: string }> = ({ letter, color }) => (
  <svg viewBox="0 0 22 24" className="h-6 w-[22px]">
    <path d="M5 1h11l5 5v17H5z" fill="#eef4fb" stroke="#9ab0cc" />
    <path d="M8 12h10M8 15h10M8 18h10M12 10v11M16 10v11" stroke="#7f9fd0" />
    <path d="M1 3l9-1v11l-9-1z" fill="#fff" stroke={color} />
    <text x="5.500" y="11" textAnchor="middle" fontSize="9" fontWeight="bold" fontFamily="Liberation Sans" fill={color}>{letter}</text>
  </svg>
);

const GenesisEye = () => (
  <svg viewBox="0 0 24 24" className="size-6">
    <path d="M1 5l6-4 5 5 10 4q2 8-5 12Q8 24 4 15z" fill="#128a86" />
    <ellipse cx="14" cy="14" rx="7" ry="5" fill="#3fd0b0" transform="rotate(25 14 14)" />
    <circle cx="14" cy="14" r="4" fill="#105060" />
    <circle cx="14" cy="14" r="1.500" fill="#d8f040" />
    <path d="M1 4h9" stroke="#60f0e8" strokeWidth="2" />
  </svg>
);

const FoxG: FC<{ className?: string }> = ({ className = "size-[22px]" }) => (
  <svg viewBox="0 0 22 22" className={className} fill="none" stroke="#d8301c" strokeWidth="4">
    <path d="M19 2Q4 3 3 13q1 7 9 7 7-1 6-7-3-3-8 0" />
  </svg>
);

const tasks: { label: string; icon: ReactNode }[] = [
  { label: "钉钉", icon: <svg viewBox="0 0 22 22" className="size-[22px]"><rect width="22" height="22" rx="5" fill="#1a8cf0" /><path d="M5 4q10 3 12 7-1 4-4 4l-3 4 1-5q-4-2-6-10z" fill="#fff" /></svg> },
  { label: "Admi...", icon: <svg viewBox="0 0 24 24" className="size-6"><path d="M1 1h21l1 2v20H1z" fill="#4a5cc8" /><path d="M7 1h11v8H7z" fill="#e8e8f4" /><path d="M13 2h3v5h-3z" fill="#223090" /><path d="M4 12h16v11H4z" fill="#fbe4e4" /><path d="M6 15h12M6 18h12" stroke="#e08080" /></svg> },
  { label: "Foxm...", icon: <FoxG /> },
  { label: "兴森...", icon: <svg viewBox="0 0 24 24" className="size-6"><path d="M12 2q10 2 11 10-2 8-9 10H9Q1 17 1 11 3 3 12 2z" fill="#f2cf80" /><path d="M12 3v12M6 5l5 12M18 5l-4 12M2 11l8 6M22 11l-7 6" stroke="#c88a30" /><path d="M15 8l2 5h5l-4 3 2 6-5-4-5 4 2-6-4-3h5z" fill="#e88020" /></svg> },
  { label: "EDS...", icon: <svg viewBox="0 0 24 24" className="size-6" fill="none" stroke="#109850" strokeWidth="3"><path d="M4 3h12q6 3 2 8l-6 3M1 8h12M5 12h8M2 21h6v-4h6" /></svg> },
  { label: "计算器", icon: <svg viewBox="0 0 20 24" className="h-6 w-5"><rect x="1" width="18" height="24" fill="#6b7c88" /><rect x="3" y="2" width="14" height="5" fill="#3cc0f0" /><path d="M4 11h3M9 11h3M14 11h3M4 15h3M9 15h3M4 19h3M9 19h3" stroke="#dfe8ee" strokeWidth="3" /><path d="M14 14h3v7h-3z" fill="#1c50a0" /></svg> },
  { label: "制作...", icon: <svg viewBox="0 0 20 24" className="h-6 w-5"><rect x="1" y="1" width="18" height="22" rx="2" fill="#d8f0fc" /><path d="M4 5h12M4 8h12M4 11h12M4 14h12M4 17h12M4 20h12" stroke="#3a9ad0" /></svg> },
  { label: "Gene...", icon: <GenesisEye /> },
  { label: "Engin...", icon: <XIcon className="size-[22px]" /> },
  { label: "Progr...", icon: <XIcon className="size-[22px]" /> },
  { label: "Grap...", icon: <XIcon className="size-[22px]" /> },
  { label: "6SA3...", icon: <svg viewBox="0 0 22 22" className="size-[22px]"><rect x="1" y="1" width="20" height="20" fill="#c8e4f8" /><rect x="3" y="3" width="16" height="13" fill="#4aa0d8" /><path d="M3 12q8-5 16 0v4H3z" fill="#2a6a70" /></svg> },
  { label: "Micr...", icon: <svg viewBox="0 0 22 24" className="h-6 w-[22px]"><path d="M4 1h14l3 4v17H4z" fill="#fbe4d8" stroke="#d8502c" /><rect x="1" y="4" width="15" height="17" rx="2" fill="#e05a30" /><text x="8" y="16" textAnchor="middle" fontSize="10" fontWeight="bold" fontFamily="Liberation Sans" fill="#fff">PC</text></svg> },
  { label: "CAM_...", icon: <GenesisEye /> },
  { label: "SA3X...", icon: <Doc letter="W" color="#3054a8" /> },
  { label: "6sa3x...", icon: <Doc letter="W" color="#3054a8" /> },
  { label: "6SA3...", icon: <Doc letter="X" color="#2a8a30" /> },
  { label: "6SA3...", icon: <Doc letter="X" color="#2a8a30" /> },
  { label: "外层...", icon: <Doc letter="X" color="#2a8a30" /> },
];

const Taskbar = () => (
  <footer className={clsx("flex h-10 shrink-0 items-stretch bg-[#101010] text-[13px] text-white", UI)}>
    <button aria-label="Start" className="flex w-[48px] items-center justify-center">
      <svg viewBox="0 0 16 16" className="size-4" fill="#fff"><path d="M0 2.300L6.500 1.400V7.500H0zM7.500 1.200L16 0v7.500H7.500zM0 8.500h6.500v6.100L0 13.700zM7.500 8.500H16V16l-8.500-1.200z" /></svg>
    </button>
    <div className="my-3 mr-[14px] ml-[6px] w-[3px] border-x border-[#444]" />
    <div className="flex min-w-0 flex-1">
      {tasks.map((t, i) => (
        <button key={i} className={clsx("flex min-w-0 flex-1 flex-col px-1", t.label === "Grap..." && "bg-[#333]")}>
          <span className="flex flex-1 items-center gap-[3px] pl-[4px] whitespace-nowrap"><span className="w-6 shrink-0">{t.icon}</span>{t.label}</span>
          <span className="h-[2px] w-full bg-[#76b9ed]" />
        </button>
      ))}
    </div>
    <div className="flex w-[356px] shrink-0 items-center text-[12px] leading-[18px]">
      <div className="ml-2 w-[68px] text-center">45%<br />内存占用</div>
      <svg viewBox="0 0 12 8" className="ml-[5px] h-2 w-3"><path d="M1 7l5-5 5 5" stroke="#fff" fill="none" /></svg>
      <svg viewBox="0 0 18 20" className="ml-[9px] h-5 w-[18px]"><path d="M9 2v12L1 18z" fill="#f01010" /><path d="M10 9l7 9-7-3z" fill="#20e020" /><path d="M9 9l3 9H9z" fill="#f01010" /></svg>
      <svg viewBox="0 0 18 20" className="ml-[6px] h-5 w-[18px]"><path d="M2 2l14 16M16 2L2 18" stroke="#e0b0f0" strokeWidth="4" /><path d="M2 2l14 16M16 2L2 18" stroke="#8a20b0" strokeWidth="2.500" /></svg>
      <FoxG className="ml-[7px] size-[17px]" />
      <span className="ml-[7px] text-[14px]">中</span>
      <svg viewBox="0 0 18 20" className="ml-[11px] h-5 w-[18px]"><path d="M2 3l14-2 1 15-13 3z" fill="#30b030" /><path d="M13 5q-7-1-7 2t6 4-6 4" stroke="#fff" strokeWidth="2.500" fill="none" /></svg>
      <div className="ml-[12px] w-[72px] text-center">14:15<br />2025/5/20</div>
      <button aria-label="Notifications" className="ml-[12px]">
        <svg viewBox="0 0 26 26" className="size-[26px]"><path d="M2 3h16v12H9l-3 3v-3H2z" fill="#fff" /><path d="M5 6h10M5 9h10M5 12h6" stroke="#101010" /><circle cx="17" cy="17" r="7" fill="#333" stroke="#bbb" /><text x="17" y="21" textAnchor="middle" fontSize="11" fontWeight="bold" fill="#fff">1</text></svg>
      </button>
    </div>
  </footer>
);

export default function App() {
  return (
    <div className="relative flex h-screen flex-col overflow-hidden bg-[#009ceb] text-black">
      <ScreenWindow />
      <div className="ml-[245px] h-[6px] shrink-0 border-y border-[#5a6a7a] bg-[#9aaab8]" />
      <Taskbar />
      <ChecklistEditor />
      <Histogram />
      <MeasurePopup />
      <ResultsViewer />
    </div>
  );
}
